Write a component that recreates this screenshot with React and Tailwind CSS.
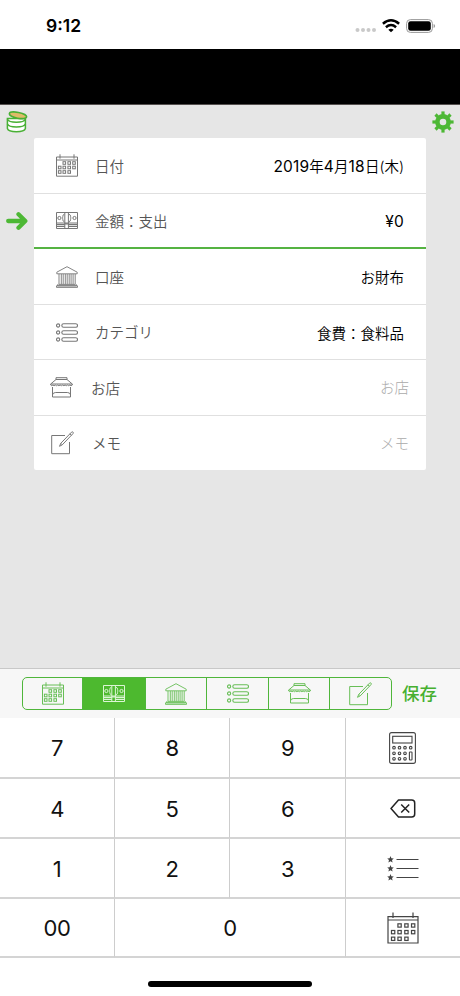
import React from "react";

const dots = [
  [8.3, 9], [13.2, 9], [18, 9],
  [3.7, 13.5], [8.3, 13.5], [13.2, 13.5], [18, 13.5],
  [3.7, 18], [8.3, 18], [13.2, 18],
];

function CalendarIcon() {
  return (
    <svg width="22" height="23" viewBox="0 0 22 23" fill="none" stroke="currentColor" strokeWidth="1">
      <path d="M.5 3h21v19.2H.5zM.5 6h21M4 .3v4.4M18 .3v4.4" />
      {dots.map(([x, y], i) => (
        <rect key={i} x={x - 1.3} y={y - 1.3} width="2.6" height="2.6" />
      ))}
    </svg>
  );
}

function MoneyIcon() {
  return (
    <svg width="22" height="17" viewBox="0 0 22 17" fill="none" stroke="currentColor" strokeWidth="1">
      <path d="M.5.5h21v16H.5zM.5 11h21M8.8.5v16M12.4.5v16" />
      <path d="M.5 12.6h8.3m3.6 0h9.1M.5 14.5h8.3m3.6 0h9.1M8.8 11.8h3.6" strokeWidth="1.2" />
      <circle cx="3.4" cy="6" r="1.6" />
      <circle cx="18.5" cy="6" r="1.6" />
      <path d="M8.3 2.3Q6.4 3 6.8 4.6 7 5.4 6.2 6q.8.6.6 1.4-.4 1.6 1.5 2.3M13 2.3q2 .7 1.6 2.3-.2.8.6 1.4-.8.6-.6 1.4.4 1.6-1.6 2.3" />
    </svg>
  );
}

function BankIcon() {
  return (
    <svg width="22" height="22" viewBox="0 0 22 22" fill="none" stroke="currentColor" strokeWidth="0.9">
      <path d="M11 .7.8 6.2v1.6h20.4V6.2zM2.5 18.4h17M1.5 18.4v1.4h19v-1.4M.5 19.8v1.6h21v-1.6z" />
      <path d="M3 8v10.3M5.3 8v10.3M7.2 8v10.3M9.3 8v10.3M11.2 8v10.3M13.2 8v10.3M15.1 8v10.3M17.1 8v10.3M19.2 8v10.3" />
    </svg>
  );
}

function ListIcon() {
  return (
    <svg width="22" height="19" viewBox="0 0 22 19" fill="none" stroke="currentColor" strokeWidth="1.1">
      {[2.5, 9.5, 16.5].map((y) => (
        <g key={y}>
          <circle cx="2.1" cy={y} r="1.6" />
          <rect x="5.8" y={y - 1.8} width="15.7" height="3.6" rx="1.8" />
        </g>
      ))}
    </svg>
  );
}

function StoreIcon() {
  return (
    <svg width="23" height="21" viewBox="0 0 23 21" fill="none" stroke="currentColor" strokeWidth="1">
      <path d="M6 .7h11v1.800H6zM6 2.500.7 7h21.600L17 2.500" />
      <path d="M.7 7v1q1 1.400 2.200 0 1.200 1.400 2.400 0 1.200 1.400 2.400 0 1.200 1.400 2.400 0 1.300 1.400 2.600 0 1.200 1.400 2.400 0 1.200 1.400 2.400 0 1.200 1.400 2.400 0 1.200 1.400 2.400 0V7" />
      <path d="M2.500 10v10h18V10M2.500 17.800q.4-2.300 3.200-2.300h11.600q2.800 0 3.200 2.300" />
    </svg>
  );
}

function MemoIcon() {
  return (
    <svg width="23" height="24" viewBox="0 0 23 24" fill="none" stroke="currentColor" strokeWidth="1">
      <path d="M14 4.500H.7v18.200h17.800V11" />
      <path d="M8.500 15.300l1.300-3L20.600 1.100q.7-.6 1.400 0t0 1.500L11.300 13.800zM9.800 12.300l1.500 1.500M18.900 2.800l1.500 1.500" />
    </svg>
  );
}

function CoinsIcon() {
  return (
    <svg width="22" height="22" viewBox="0 0 22 22" stroke="#49b035" strokeWidth="1.5">
      <path d="M1.400 7.500v10q1 3.200 9 3.200t9-3.200v-10z" fill="#fff" />
      <path d="M1.400 8.300q1.200 3 9 3t9-3M1.400 13q1.200 3 9 3t9-3" fill="none" />
      <ellipse cx="12" cy="4.300" rx="8.800" ry="2.900" transform="rotate(11 12 4.300)" fill="#dfbb68" />
    </svg>
  );
}

function GearIcon() {
  return (
    <svg width="22" height="22" viewBox="0 0 22 22" fill="none" stroke="#4db835">
      <circle cx="11" cy="11" r="5.6" strokeWidth="4.6" />
      {[0, 45, 90, 135, 180, 225, 270, 315].map((a) => (
        <path key={a} d="M11 4V.4" strokeWidth="3.2" transform={`rotate(${a} 11 11)`} />
      ))}
    </svg>
  );
}

function ArrowIcon() {
  return (
    <svg width="22" height="20" viewBox="0 0 22 20" fill="none" stroke="#4db835" strokeWidth="4.3" strokeLinecap="round" strokeLinejoin="round">
      <path d="M2.200 10h16M12.500 3.200l6.800 6.800-6.800 6.800" />
    </svg>
  );
}

function CalculatorIcon() {
  const keys = [[5, 15.7], [10.5, 15.7], [16, 15.7], [21.7, 15.7], [5, 21.3], [10.5, 21.3], [16, 21.3], [5, 26.8], [10.5, 26.8], [16, 26.8]];
  return (
    <svg width="27" height="32" viewBox="0 0 27 32" fill="none" stroke="currentColor" strokeWidth="1.1">
      <rect x=".6" y=".6" width="25.8" height="30.8" rx="2" />
      <rect x="3.7" y="4.3" width="19.3" height="6.7" />
      {keys.map(([x, y], i) => (
        <circle key={i} cx={x} cy={y} r="1.3" />
      ))}
      <rect x="20.4" y="20" width="2.6" height="8" rx=".6" />
    </svg>
  );
}

function DeleteIcon() {
  return (
    <svg width="26" height="19" viewBox="0 0 26 19" fill="none" stroke="#222" strokeWidth="1.5" strokeLinejoin="round">
      <path d="M8.500 1h13.200q3 0 3 3v11q0 3-3 3H8.500L1 9.500z" />
      <path d="M11.200 5.500l8 8M19.200 5.500l-8 8" />
    </svg>
  );
}

function StarListIcon() {
  return (
    <svg width="32" height="25" viewBox="0 0 32 25" fill="currentColor">
      {[3.5, 12.5, 21.5].map((y) => (
        <g key={y} transform={`translate(0 ${y})`}>
          <path d="M3.500-3.400l.9 2.200 2.400.2-1.800 1.600.6 2.400-2.100-1.300L1.400 3 2 .6.200-1l2.400-.2z" />
          <path d="M9.500-.5H31.500v1H9.500z" />
        </g>
      ))}
    </svg>
  );
}

function CalendarBigIcon() {
  return (
    <svg width="32" height="32" viewBox="0 0 32 32" fill="none" stroke="currentColor" strokeWidth="1.2">
      <path d="M1 4.700h30v26.300H1zM1 8h30M6 .5v5.500M26 .5v5.500" />
      {dots.map(([x, y], i) => (
        <rect key={i} x={x * 1.4 - 0.7} y={y * 1.48 - 1.5} width="3.3" height="3.3" />
      ))}
    </svg>
  );
}

const rows = [
  { label: "日付", value: "2019年4月18日(木)", Icon: CalendarIcon, cls: "h-14 border-b border-[#e0e0e0] pl-[21px] pr-[22px]" },
  { label: "金額：支出", value: "¥0", Icon: MoneyIcon, cls: "h-[55px] border-b-2 border-[#55b342] pl-[21px] pr-[22px]" },
  { label: "口座", value: "お財布", Icon: BankIcon, cls: "h-14 border-b border-[#e0e0e0] pl-[21px] pr-[22px]" },
  { label: "カテゴリ", value: "食費：食料品", Icon: ListIcon, cls: "h-[55px] border-b border-[#e0e0e0] pl-[21px] pr-[22px]" },
  { label: "お店", placeholder: "お店", Icon: StoreIcon, cls: "h-14 border-b border-[#e0e0e0] pl-[16px] pr-[17px]" },
  { label: "メモ", placeholder: "メモ", Icon: MemoIcon, cls: "h-[54px] pl-[17px] pr-[17px]" },
];

const tabs = [CalendarIcon, MoneyIcon, BankIcon, ListIcon, StoreIcon, MemoIcon];

// Latin digits run slightly larger than the kanji around them
function Value({ text }) {
  return text.split(/([¥\d()]+)/).map((part, i) =>
    /[¥\d]/.test(part) ? (
      <span key={i} className="text-[15.5px] font-normal tracking-[0.2px]">{part}</span>
    ) : (
      <span key={i}>{part}</span>
    )
  );
}

const keyCls = "flex items-center justify-center border-b-2 border-b-[#d4d4d4] border-r-[#cdcdcd] pt-[2px] tracking-[-0.5px] text-[#111]";
const iconKeyCls = "flex items-center justify-center border-b-2 border-b-[#d4d4d4] pt-[1px] pr-[1px] text-[#444]";

export default function App() {
  return (
    <main className="flex h-[996px] w-[460px] flex-col overflow-hidden bg-white font-['Inter','Noto_Sans_CJK_JP',sans-serif] text-black">
      {/* Status bar */}
      <div className="flex h-[49px] shrink-0 items-center justify-between pl-[46px] pr-[24px] pt-[2px]">
        <span className="text-[17.5px] font-semibold leading-none">9:12</span>
        <div className="flex items-center">
          <svg width="22" height="14" viewBox="0 0 22 14" fill="#c9c9c9">
            <circle cx="2.5" cy="11" r="2" />
            <circle cx="8" cy="11" r="2" />
            <circle cx="13.5" cy="11" r="2" />
            <circle cx="19" cy="11" r="2" />
          </svg>
          <svg className="ml-[5px]" width="18" height="14" viewBox="0 0 18 14" fill="none" stroke="#000" strokeWidth="2.5">
            <path d="M.9 4.700q8.100-6.800 16.200 0M3.900 8.200q5.100-4.300 10.200 0" />
            <path d="M9 13.300 6.300 10.700q2.700-2.100 5.400 0z" fill="#000" stroke="none" />
          </svg>
          <svg className="ml-[6px]" width="30" height="14" viewBox="0 0 30 14" fill="none">
            <rect x=".6" y=".6" width="25.8" height="12.8" rx="3.8" stroke="#999" />
            <rect x="2.2" y="2.2" width="22.6" height="9.6" rx="2.3" fill="#000" />
            <path d="M27.600 5q1.500.5 1.500 2t-1.500 2z" fill="#999" />
          </svg>
        </div>
      </div>
      <div className="h-[56px] shrink-0 border-b border-[#55504f] bg-black" />

      {/* Entry form */}
      <div className="flex h-[563px] shrink-0 flex-col bg-[#e6e6e6]">
        <div className="flex h-[33px] shrink-0 items-start justify-between px-[6px] pt-[6px]">
          <CoinsIcon />
          <GearIcon />
        </div>
        <div className="flex">
          <div className="flex w-[34px] justify-center pt-[73px]">
            <ArrowIcon />
          </div>
          <div className="w-[392px] overflow-hidden rounded-[2px] bg-white">
            {rows.map(({ label, value, placeholder, Icon, cls }) => (
              <div key={label} className={`flex items-center text-[14.5px] ${cls}`}>
                <span className="flex w-[23px] justify-center text-[#777]">
                  <Icon />
                </span>
                <span className={`pt-[2px] font-[350] text-[#555] ${value ? "ml-[17px]" : "ml-[18px]"}`}>{label}</span>
                {value ? (
                  <span className="ml-auto pt-[3px] font-[350] text-black">
                    <Value text={value} />
                  </span>
                ) : (
                  <span className="ml-auto pt-[1px] font-light text-[#aaa]">{placeholder}</span>
                )}
              </div>
            ))}
          </div>
        </div>
      </div>

      {/* Field switcher */}
      <div className="flex h-[50px] shrink-0 items-center border-t border-[#c8c8c8] bg-[#f7f7f7] pl-[22px]">
        <div className="grid h-[33px] w-[370px] grid-cols-[60px_63px_61px_62px_61px_61px] overflow-hidden rounded-[5px] border border-[#4fb63b]">
          {tabs.map((Icon, i) => (
            <button
              key={i}
              className={`flex items-center justify-center border-[#4fb63b] ${
                i === 1 ? "bg-[#4db92f] text-[#dcf5d5]" : "text-[#68be57]"
              } ${i < 5 ? "border-r" : ""}`}
            >
              <Icon />
            </button>
          ))}
        </div>
        <button className="ml-[10px] pt-[2px] text-[17.5px] font-medium text-[#46b030]">保存</button>
      </div>

      {/* Keypad */}
      <div className="grid shrink-0 grid-cols-[115px_115px_116px_114px] grid-rows-[61px_60px_60px_59px] text-[22px]">
        <div className={`${keyCls} border-r`}>7</div>
        <div className={`${keyCls} border-r`}>8</div>
        <div className={`${keyCls} border-r`}>9</div>
        <div className={iconKeyCls}><CalculatorIcon /></div>
        <div className={`${keyCls} border-r`}>4</div>
        <div className={`${keyCls} border-r`}>5</div>
        <div className={`${keyCls} border-r`}>6</div>
        <div className={iconKeyCls}><DeleteIcon /></div>
        <div className={`${keyCls} border-r`}>1</div>
        <div className={`${keyCls} border-r`}>2</div>
        <div className={`${keyCls} border-r`}>3</div>
        <div className={iconKeyCls}><StarListIcon /></div>
        <div className={`${keyCls} border-r`}>00</div>
        <div className={`${keyCls} col-span-2 border-r`}>0</div>
        <div className={iconKeyCls}><CalendarBigIcon /></div>
      </div>
      <div className="mx-auto mt-[23px] h-[6px] w-[164px] rounded-full bg-black" />
    </main>
  );
}
